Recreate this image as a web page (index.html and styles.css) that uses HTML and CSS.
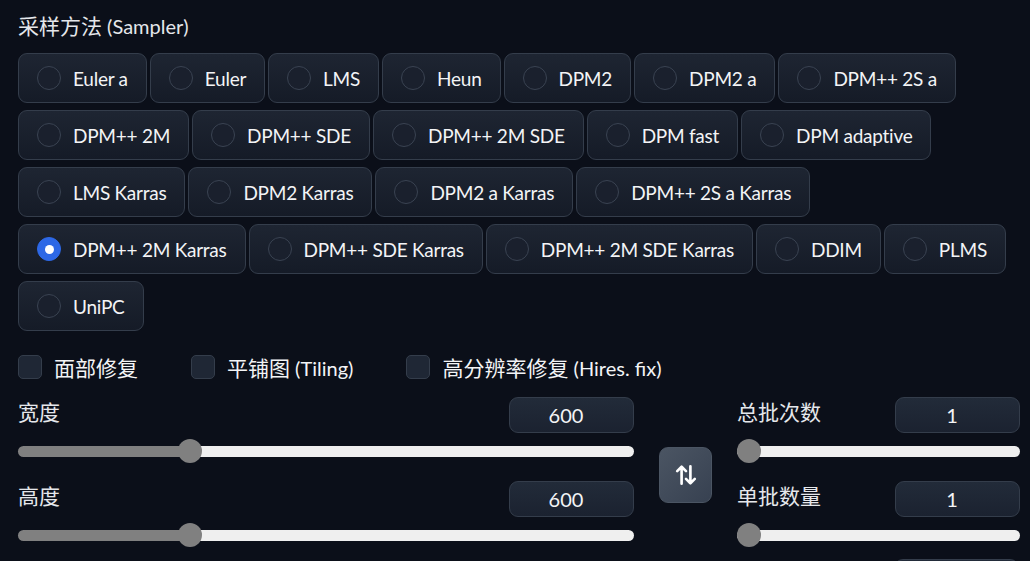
FILE: index.html
```html
<!DOCTYPE html>
<html lang="zh">
<head>
<meta charset="utf-8">
<title>Sampler settings</title>
<link rel="stylesheet" href="styles.css">
</head>
<body>
<div class="panel">
  <div class="block-title"><span class="cjk">采样方法</span> (Sampler)</div>
  <div class="radio-group">
    <label class="radio-item"><span class="radio"></span><span class="opt">Euler a</span></label>
    <label class="radio-item"><span class="radio"></span><span class="opt">Euler</span></label>
    <label class="radio-item"><span class="radio"></span><span class="opt">LMS</span></label>
    <label class="radio-item"><span class="radio"></span><span class="opt">Heun</span></label>
    <label class="radio-item"><span class="radio"></span><span class="opt">DPM2</span></label>
    <label class="radio-item"><span class="radio"></span><span class="opt">DPM2 a</span></label>
    <label class="radio-item"><span class="radio"></span><span class="opt">DPM++ 2S a</span></label>
    <label class="radio-item"><span class="radio"></span><span class="opt">DPM++ 2M</span></label>
    <label class="radio-item"><span class="radio"></span><span class="opt">DPM++ SDE</span></label>
    <label class="radio-item"><span class="radio"></span><span class="opt">DPM++ 2M SDE</span></label>
    <label class="radio-item"><span class="radio"></span><span class="opt">DPM fast</span></label>
    <label class="radio-item"><span class="radio"></span><span class="opt">DPM adaptive</span></label>
    <label class="radio-item"><span class="radio"></span><span class="opt">LMS Karras</span></label>
    <label class="radio-item"><span class="radio"></span><span class="opt">DPM2 Karras</span></label>
    <label class="radio-item"><span class="radio"></span><span class="opt">DPM2 a Karras</span></label>
    <label class="radio-item"><span class="radio"></span><span class="opt">DPM++ 2S a Karras</span></label>
    <label class="radio-item"><span class="radio checked"></span><span class="opt">DPM++ 2M Karras</span></label>
    <label class="radio-item"><span class="radio"></span><span class="opt">DPM++ SDE Karras</span></label>
    <label class="radio-item"><span class="radio"></span><span class="opt">DPM++ 2M SDE Karras</span></label>
    <label class="radio-item"><span class="radio"></span><span class="opt">DDIM</span></label>
    <label class="radio-item"><span class="radio"></span><span class="opt">PLMS</span></label>
    <label class="radio-item"><span class="radio"></span><span class="opt">UniPC</span></label>
  </div>

  <div class="check-row">
    <label class="check-item"><span class="checkbox"></span><span><span class="cjk">面部修复</span></span></label>
    <label class="check-item"><span class="checkbox"></span><span><span class="cjk">平铺图</span> (Tiling)</span></label>
    <label class="check-item"><span class="checkbox"></span><span><span class="cjk">高分辨率修复</span> (Hires. fix)</span></label>
  </div>

  <div class="dims">
    <div class="col">
      <div class="slider-block">
        <div class="slider-head"><span class="slider-label cjk">宽度</span><input class="num" type="text" value="600"></div>
        <input class="range" type="range" min="64" max="2048" value="600" style="--fill: 28%">
      </div>
      <div class="slider-block">
        <div class="slider-head"><span class="slider-label cjk">高度</span><input class="num" type="text" value="600"></div>
        <input class="range" type="range" min="64" max="2048" value="600" style="--fill: 28%">
      </div>
    </div>
    <div class="swap-cell">
      <button class="swap" type="button" aria-label="swap">
        <svg width="22" height="22" viewBox="0 0 20 20" fill="none" stroke="#ffffff" stroke-width="2.4" stroke-linecap="round" stroke-linejoin="round">
          <path d="M6 18V2.5M2 6.5l4-4 4 4"/>
          <path d="M14 2v15.5M10 13.5l4 4 4-4"/>
        </svg>
      </button>
    </div>
    <div class="col">
      <div class="slider-block">
        <div class="slider-head"><span class="slider-label cjk">总批次数</span><input class="num" type="text" value="1"></div>
        <input class="range" type="range" min="1" max="100" value="1" style="--fill: 0%">
      </div>
      <div class="slider-block">
        <div class="slider-head"><span class="slider-label cjk">单批数量</span><input class="num" type="text" value="1"></div>
        <input class="range" type="range" min="1" max="8" value="1" style="--fill: 0%">
      </div>
    </div>
  </div>

  <div class="cfg-row">
    <input class="num" type="text" value="7" aria-label="CFG Scale">
  </div>
</div>
</body>
</html>
```

FILE: styles.css
```css
html, body {
  margin: 0;
  padding: 0;
  background: #0b0f19;
  overflow: hidden;
}

body {
  font-family: Lato, "Noto Sans CJK SC", sans-serif;
  font-size: 20px;
  color: #f3f4f6;
}

.cjk {
  font-size: 21px;
  letter-spacing: 0;
}

.panel {
  padding: 13px 11px 0 18px;
  display: flex;
  flex-direction: column;
}

.block-title {
  line-height: 26px;
  height: 26px;
  color: #e5e7eb;
}

.radio-group {
  margin-top: 14px;
  display: flex;
  flex-wrap: wrap;
  row-gap: 7px;
  column-gap: 3px;
}

.radio-item {
  height: 50px;
  box-sizing: border-box;
  display: flex;
  align-items: center;
  gap: 12px;
  padding: 0 18px;
  border: 1px solid #343d4b;
  border-radius: 9px;
  background: linear-gradient(to bottom, #1e2532, #151b27);
  white-space: nowrap;
  color: #f3f4f6;
}

.opt {
  font-size: 19px;
  letter-spacing: -0.25px;
}

.radio {
  width: 24px;
  height: 24px;
  box-sizing: border-box;
  border-radius: 50%;
  border: 1px solid #3a4352;
  background: #1a202d;
  flex: none;
  position: relative;
}

.radio.checked {
  background: #2d68e6;
  border-color: #2d68e6;
}

.radio.checked::after {
  content: "";
  position: absolute;
  left: 50%;
  top: 50%;
  width: 9px;
  height: 9px;
  margin: -4.5px 0 0 -4.5px;
  border-radius: 50%;
  background: #ffffff;
}

.check-row {
  margin-top: 24px;
  display: flex;
  align-items: center;
  gap: 53px;
  height: 24px;
}

.check-item {
  display: flex;
  align-items: center;
  gap: 12px;
  white-space: nowrap;
}

.checkbox {
  width: 24px;
  height: 24px;
  box-sizing: border-box;
  border-radius: 5px;
  border: 1px solid #343d4b;
  background: #1f2735;
  flex: none;
}

.dims {
  margin-top: 18px;
  display: grid;
  grid-template-columns: 616px 53px 283px;
  column-gap: 25px;
}

.col {
  display: flex;
  flex-direction: column;
  gap: 18px;
}

.swap-cell {
  display: flex;
  align-items: center;
  padding-top: 6px;
}

.swap {
  width: 53px;
  height: 56px;
  border: 1px solid #4b5563;
  border-radius: 9px;
  background: linear-gradient(135deg, #4b5563, #374151);
  display: flex;
  align-items: center;
  justify-content: center;
  padding: 0;
  cursor: pointer;
}

.slider-block {
  display: flex;
  flex-direction: column;
  gap: 6px;
}

.slider-head {
  display: flex;
  justify-content: space-between;
  align-items: center;
  height: 36px;
}

.slider-label {
  color: #e5e7eb;
  margin-top: -8px;
}

.num {
  width: 125px;
  height: 36px;
  box-sizing: border-box;
  border: 1px solid #343d4b;
  border-radius: 9px;
  background: linear-gradient(to bottom, #222b39, #1b2230);
  color: #f3f4f6;
  font-family: Lato, "Noto Sans CJK SC", sans-serif;
  font-size: 20px;
  text-align: center;
  padding: 0 11px 0 0;
  outline: none;
}

.range {
  -webkit-appearance: none;
  appearance: none;
  width: 100%;
  height: 24px;
  margin: 0;
  background: transparent;
}

.range::-webkit-slider-runnable-track {
  height: 11px;
  border-radius: 6px;
  background: linear-gradient(to right, #808080 var(--fill), #efefef var(--fill));
}

.range::-webkit-slider-thumb {
  -webkit-appearance: none;
  appearance: none;
  width: 24px;
  height: 24px;
  border-radius: 50%;
  background: #808080;
  margin-top: -6.5px;
  border: none;
}

.cfg-row {
  margin-top: 12px;
  display: flex;
  justify-content: flex-end;
}
```
